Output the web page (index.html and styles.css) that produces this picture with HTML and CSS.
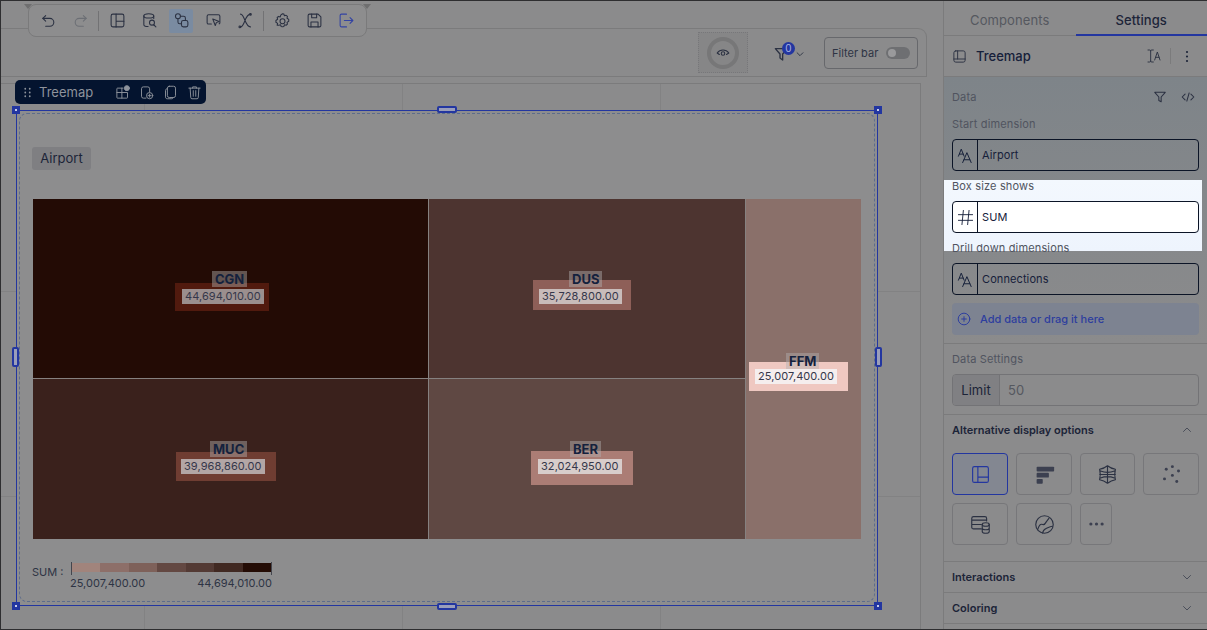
FILE: index.html
```html
<!DOCTYPE html>
<html lang="en">
<head>
<meta charset="utf-8">
<title>Treemap settings</title>
<link rel="stylesheet" href="styles.css">
</head>
<body>
<div class="app">
  <main class="main">
    <div class="edit-toolbar">
      <button class="tool"><svg class="ico" viewBox="0 0 24 24"><path d="M8 5 4 9l4 4"/><path d="M4 9h10a5.500 5.500 0 0 1 0 11H8"/></svg></button>
      <button class="tool tool-off"><svg class="ico" viewBox="0 0 24 24"><path d="m16 5 4 4-4 4"/><path d="M20 9H10a5.500 5.500 0 0 0 0 11h6"/></svg></button>
      <span class="tool-sep"></span>
      <button class="tool"><svg class="ico" viewBox="0 0 24 24"><rect x="3" y="3" width="18" height="18" rx="2.500"/><path d="M10 3v18M10 13h11"/></svg></button>
      <button class="tool"><svg class="ico" viewBox="0 0 24 24"><ellipse cx="11" cy="5.500" rx="7" ry="3"/><path d="M4 5.500v12c0 1.600 2.500 3 6 3M18 5.500V9"/><circle cx="15.500" cy="15" r="3.500"/><path d="m18 18 3 3"/></svg></button>
      <button class="tool tool-on"><svg class="ico" viewBox="0 0 24 24"><circle cx="7" cy="6" r="3.500"/><rect x="12" y="12" width="9" height="9" rx="2.500"/><path d="M7 9.500V14c0 1.500 1 2.500 2.500 2.500H12M10.500 6H15c1.500 0 2.500 1 2.500 2.500V12"/></svg></button>
      <button class="tool"><svg class="ico" viewBox="0 0 24 24"><path d="M9 17H5a2 2 0 0 1-2-2V6a2 2 0 0 1 2-2h14a2 2 0 0 1 2 2v9a2 2 0 0 1-1 1.700"/><path d="m11 10 9 3.500-4 1.500-1.500 4z"/></svg></button>
      <button class="tool"><svg class="ico" viewBox="0 0 24 24"><path d="M5 3c6 0 6 18 14 18M19 3C11 3 11 21 5 21"/><circle cx="19" cy="3.500" r="1.200"/><circle cx="4" cy="21" r="1.200"/></svg></button>
      <span class="tool-sep"></span>
      <button class="tool"><svg class="ico" viewBox="0 0 24 24"><path d="m12 2.500 2 .5.700 2.400 2.400-.7 1.900 1.600-.6 2.500 2.400 1.700v2.500l-2.400 1.600.6 2.500-1.900 1.600-2.400-.7-.7 2.400-2 .5-2-.5-.7-2.400-2.400.7L4.500 18.600l.6-2.500L2.700 14.500V12l2.400-1.700-.6-2.500 1.900-1.600 2.400.7.700-2.400z"/><circle cx="12" cy="13" r="3.500"/></svg></button>
      <button class="tool"><svg class="ico" viewBox="0 0 24 24"><path d="M5 3h12l4 4v12a2 2 0 0 1-2 2H5a2 2 0 0 1-2-2V5a2 2 0 0 1 2-2z"/><path d="M7 21v-7h10v7M8 3v5h7V3"/></svg></button>
      <button class="tool tool-exit"><svg class="ico" viewBox="0 0 24 24"><path d="M12 3H5a2 2 0 0 0-2 2v14a2 2 0 0 0 2 2h7"/><path d="M9 12h12M17 8l4 4-4 4"/></svg></button>
    </div>

    <header class="topbar">
      <div class="eye-box">
        <span class="eye-ring"><svg class="ico ico-eye" viewBox="0 0 24 24"><path d="M2 12c5-7 15-7 20 0-2 1.500-3 2-4 2.500M6 14.500c-1.500-.5-2.500-1.500-4-2.500"/><circle cx="12" cy="13" r="3"/></svg></span>
      </div>
      <div class="filter-btn">
        <svg class="ico ico-filter" viewBox="0 0 24 24"><path d="M2 4h18l-7 8v9l-4-3v-6z"/></svg>
        <span class="badge">0</span>
        <svg class="ico ico-chev" viewBox="0 0 24 24"><path d="m5 9 7 7 7-7"/></svg>
      </div>
      <div class="filter-bar"><span>Filter bar</span><span class="toggle"><span class="knob"></span></span></div>
    </header>

    <section class="canvas">
      <div class="widget">
        <div class="widget-bar">
          <svg class="ico ico-grip" viewBox="0 0 12 16"><circle cx="3" cy="3" r="1.200"/><circle cx="9" cy="3" r="1.200"/><circle cx="3" cy="8" r="1.200"/><circle cx="9" cy="8" r="1.200"/><circle cx="3" cy="13" r="1.200"/><circle cx="9" cy="13" r="1.200"/></svg>
          <span class="widget-name">Treemap</span>
          <span class="widget-sep"></span>
          <svg class="ico ico-w" viewBox="0 0 24 24"><path d="M13 5H4a1 1 0 0 0-1 1v14a1 1 0 0 0 1 1h15a1 1 0 0 0 1-1v-8H3M11 5v16"/><circle class="solid" cx="19" cy="5" r="4"/></svg>
          <svg class="ico ico-w" viewBox="0 0 24 24"><path d="M11 21H7a3 3 0 0 1-3-3V6a3 3 0 0 1 3-3h7a3 3 0 0 1 3 3v5"/><circle cx="17" cy="17" r="5"/><path d="M17 14.500v5M14.500 17h5"/></svg>
          <svg class="ico ico-w" viewBox="0 0 24 24"><rect x="7" y="2" width="13" height="18" rx="3"/><path d="M7 6c-2 0-3 1-3 3v10c0 2 1 3 3 3h7c1 0 2-.5 2.500-2"/></svg>
          <svg class="ico ico-w" viewBox="0 0 24 24"><path d="M3 5h18M9 5V3h6v2M5 5l1 15a2 2 0 0 0 2 2h8a2 2 0 0 0 2-2l1-15M10 9v9M14 9v9"/></svg>
        </div>
        <span class="handle h-tl"></span><span class="handle h-tr"></span><span class="handle h-bl"></span><span class="handle h-br"></span>
        <span class="pill pill-t"></span><span class="pill pill-b"></span><span class="pill pill-l"></span><span class="pill pill-r"></span>

        <div class="widget-inner">
          <div class="chip">Airport</div>
          <div class="treemap">
            <div class="tile tile-cgn"><span class="tile-name">CGN</span><span class="halo"><span class="val">44,694,010.00</span></span></div>
            <div class="tile tile-dus"><span class="tile-name">DUS</span><span class="halo"><span class="val">35,728,800.00</span></span></div>
            <div class="tile tile-ffm"><span class="tile-name">FFM</span><span class="halo"><span class="val">25,007,400.00</span></span></div>
            <div class="tile tile-muc"><span class="tile-name">MUC</span><span class="halo"><span class="val">39,968,860.00</span></span></div>
            <div class="tile tile-ber"><span class="tile-name">BER</span><span class="halo"><span class="val">32,024,950.00</span></span></div>
          </div>
          <div class="legend">
            <span class="legend-title">SUM :</span>
            <div class="legend-scale">
              <div class="legend-bar"><i class="s1"></i><i class="s2"></i><i class="s3"></i><i class="s4"></i><i class="s5"></i><i class="s6"></i><i class="s7"></i></div>
              <div class="legend-labels"><span>25,007,400.00</span><span>44,694,010.00</span></div>
            </div>
          </div>
        </div>
      </div>
    </section>
  </main>

  <aside class="panel">
    <nav class="tabs"><span class="tab">Components</span><span class="tab tab-on">Settings</span></nav>
    <div class="panel-title">
      <svg class="ico ico-title" viewBox="0 0 24 24"><rect x="3" y="3" width="18" height="18" rx="3"/><path d="M9 3v13M3 16h18"/></svg>
      <span class="panel-name">Treemap</span>
      <svg class="ico ico-ia" viewBox="0 0 24 24"><path d="M3 3h2.500a1.500 1.500 0 0 1 1.500 1.500V19.500A1.500 1.500 0 0 1 5.500 21H3M11 3H8.500A1.500 1.500 0 0 0 7 4.500M7 19.500A1.500 1.500 0 0 0 8.500 21H11M13 18l4-12 4 12M14.500 14h5"/></svg>
      <span class="title-sep"></span>
      <svg class="ico-dots" viewBox="0 0 4 16"><circle cx="2" cy="2.500" r="1.300"/><circle cx="2" cy="8" r="1.300"/><circle cx="2" cy="13.500" r="1.300"/></svg>
    </div>

    <section class="sec sec-data">
      <div class="spotlight"></div>
      <div class="sec-head">
        <span class="lbl">Data</span>
        <svg class="ico ico-sm" viewBox="0 0 24 24"><path d="M3 4h18l-7 8v8l-4-2v-6z"/></svg>
        <svg class="ico ico-sm ico-code" viewBox="0 0 24 24"><path d="M7 7l-5 5 5 5M17 7l5 5-5 5M14 5l-4 14"/></svg>
      </div>
      <div class="lbl lbl-field">Start dimension</div>
      <div class="field"><span class="field-ico"><svg class="ico ico-aa" viewBox="0 0 24 24"><path d="M2 13 6 3l4 10M3.500 10h5M8 22l6-14 6 14M10 18h8"/></svg></span><span class="field-val">Airport</span></div>
      <div class="lbl lbl-field lbl-lit">Box size shows</div>
      <div class="field field-lit"><span class="field-ico"><svg class="ico ico-hash" viewBox="0 0 24 24"><path d="M9 2 7 22M17 2l-2 20M2 8h20M2 16h20"/></svg></span><span class="field-val">SUM</span></div>
      <div class="lbl lbl-field lbl-lit">Drill down dimensions</div>
      <div class="field"><span class="field-ico"><svg class="ico ico-aa" viewBox="0 0 24 24"><path d="M2 13 6 3l4 10M3.500 10h5M8 22l6-14 6 14M10 18h8"/></svg></span><span class="field-val">Connections</span></div>
      <div class="add-data">
        <svg class="ico ico-add" viewBox="0 0 24 24"><circle cx="12" cy="12" r="10"/><path d="M12 8v8M8 12h8"/></svg>
        <span>Add data or drag it here</span>
      </div>
    </section>

    <section class="sec sec-settings">
      <div class="lbl">Data Settings</div>
      <div class="limit"><span class="limit-key">Limit</span><span class="limit-val">50</span></div>
    </section>

    <section class="sec sec-alt">
      <div class="sec-row"><span class="sec-title">Alternative display options</span><svg class="ico ico-chev2" viewBox="0 0 24 24"><path d="m5 15 7-7 7 7"/></svg></div>
      <div class="opts">
        <div class="opt opt-on"><svg class="ico ico-opt" viewBox="0 0 24 24"><rect x="3" y="3" width="18" height="18" rx="2"/><path d="M9 3v18M9 15h12"/></svg></div>
        <div class="opt"><svg class="ico-opt" viewBox="0 0 24 24"><rect class="fill" x="3" y="3" width="20" height="5.500" rx="1"/><rect class="fill" x="3" y="10" width="14" height="5.500" rx="1"/><rect class="fill" x="3" y="17" width="7" height="5.500" rx="1"/></svg></div>
        <div class="opt"><svg class="ico ico-opt" viewBox="0 0 24 24"><path d="M12 2c2.500 2 5.500 3.500 9 4-1 4-1 8 0 12-3.500.5-6.500 2-9 4-2.500-2-5.500-3.500-9-4 1-4 1-8 0-12 3.500-.5 6.500-2 9-4zM12 2v20M3 12h18M4 8c5 2 11 2 16 0M4 16c5-2 11-2 16 0"/></svg></div>
        <div class="opt"><svg class="ico-opt" viewBox="0 0 24 24"><circle class="fill" cx="13" cy="3" r="1.700"/><circle class="fill" cx="6" cy="6" r="1.700"/><circle class="fill" cx="20" cy="8" r="1.700"/><circle class="fill" cx="13" cy="13" r="1.700"/><circle class="fill" cx="4" cy="17" r="1.700"/><circle class="fill" cx="18" cy="20" r="1.700"/></svg></div>
        <div class="opt"><svg class="ico ico-opt" viewBox="0 0 24 24"><path d="M13 17H4a2 2 0 0 1-2-2V5a2 2 0 0 1 2-2h13a2 2 0 0 1 2 2v3M2 7h17M2 12h11"/><ellipse cx="18" cy="12" rx="4" ry="2"/><path d="M14 12v8c0 1 2 2 4 2s4-1 4-2v-8M14 16c0 1 2 2 4 2s4-1 4-2"/></svg></div>
        <div class="opt"><svg class="ico ico-opt" viewBox="0 0 24 24"><circle cx="12" cy="12" r="10"/><path d="M4 18c2-5 3-7 6-6 2 .5 3-1 4-3l3-4M10 22c0-4 3-5 5-6 2-1 4-2 6-2"/></svg></div>
        <div class="opt opt-more"><svg class="ico-more" viewBox="0 0 16 4"><circle class="fill" cx="2" cy="2" r="1.700"/><circle class="fill" cx="8" cy="2" r="1.700"/><circle class="fill" cx="14" cy="2" r="1.700"/></svg></div>
      </div>
    </section>

    <section class="sec sec-fold"><span class="sec-title">Interactions</span><svg class="ico ico-chev2" viewBox="0 0 24 24"><path d="m5 9 7 7 7-7"/></svg></section>
    <section class="sec sec-fold"><span class="sec-title">Coloring</span><svg class="ico ico-chev2" viewBox="0 0 24 24"><path d="m5 9 7 7 7-7"/></svg></section>
  </aside>
</div>
</body>
</html>
```

FILE: styles.css
```css
* { box-sizing: border-box; }
html, body { margin: 0; padding: 0; }
body { width: 1207px; height: 630px; overflow: hidden; background: #2e2e30; font-family: Inter, "Liberation Sans", sans-serif; color: #16203a; }
button { font: inherit; }

.ico { fill: none; stroke: #2b3142; stroke-width: 1.700; stroke-linecap: round; stroke-linejoin: round; flex: none; display: block; }
.fill { fill: #3c4050; }

.app { display: flex; width: 1207px; height: 628px; margin-top: 1px; padding-left: 1px; background: #2e2e30; }
.main { position: relative; width: 942px; flex: none; background: #8b8b8c; padding-top: 27px; }

/* floating edit toolbar */
.edit-toolbar { position: absolute; left: 27px; top: 3px; width: 339px; height: 33px; display: flex; align-items: center; padding-left: 7px; background: #8d8d8e; border: 1px solid #7a7a7b; border-radius: 8px; z-index: 5; }
.edit-toolbar::before, .edit-toolbar::after { content: ""; position: absolute; top: -1px; width: 0; height: 0; border-top: 5px solid #6e6e6f; border-left: 4px solid transparent; border-right: 4px solid transparent; }
.edit-toolbar::before { left: -5px; }
.edit-toolbar::after { right: -5px; }
.tool { width: 24px; height: 24px; padding: 3.500px; margin-right: 8px; background: none; border: 0; border-radius: 2px; display: block; flex: none; }
.tool .ico { width: 17px; height: 17px; stroke-width: 1.500; }
.tool-off .ico { stroke: #6c6f75; }
.tool-on { background: #7a8ba1; }
.tool-exit { margin-right: 0; }
.tool-exit .ico { stroke: #3343a3; }
.tool-sep { width: 1px; height: 20px; background: #727274; margin: 0 6px 0 -2px; flex: none; }

/* top filter strip */
.topbar { height: 49px; margin-right: 16px; border: 1px solid #7b7b7c; border-left: 0; border-radius: 0 9px 0 0; display: flex; align-items: center; justify-content: flex-end; padding-right: 8px; }
.eye-box { width: 50px; height: 41px; border: 1px dotted #77777a; background: #868687; display: flex; align-items: center; justify-content: center; margin-right: 26px; }
.eye-ring { width: 32px; height: 32px; border: 4px solid #777778; border-radius: 50%; display: flex; align-items: center; justify-content: center; }
.ico-eye { width: 14px; height: 14px; stroke-width: 1.800; }
.filter-btn { position: relative; width: 33px; height: 24px; margin-right: 17px; display: flex; align-items: center; }
.ico-filter { width: 16px; height: 16px; margin-top: 2px; stroke-width: 2; }
.badge { position: absolute; left: 8px; top: 1px; width: 13px; height: 13px; border-radius: 50%; background: #2336a0; color: #a9b3e0; font-size: 10px; line-height: 13px; text-align: center; }
.ico-chev { width: 10px; height: 10px; margin: 2px 0 0 5px; stroke-width: 2.200; }
.filter-bar { width: 94px; height: 32px; border: 1px solid #67686c; border-radius: 4px; display: flex; align-items: center; justify-content: space-between; padding: 0 7px; font-size: 11px; color: #2e3444; }
.toggle { width: 24px; height: 12px; border-radius: 6px; background: #6e6f72; padding: 2px; display: block; }
.knob { display: block; width: 8px; height: 8px; border-radius: 50%; background: #9a9a9c; }

/* canvas */
.canvas { height: 546px; margin: 6px 22px 0 0; padding: 26px 0 0 15px; border: 1px solid #7b7b7c; border-left: 0; border-bottom: 0;
  background:
    linear-gradient(#828283, #828283) 143px 0 / 1px 100% no-repeat,
    linear-gradient(#828283, #828283) 401px 0 / 1px 100% no-repeat,
    linear-gradient(#828283, #828283) 659px 0 / 1px 100% no-repeat,
    linear-gradient(#828283, #828283) 0 207px / 100% 1px no-repeat,
    linear-gradient(#828283, #828283) 0 412px / 100% 1px no-repeat,
    #8b8b8c; }
.widget { position: relative; width: 862px; height: 496px; border: 1.500px solid #2336a0; background: #8d8d8e; padding: 2px; }
.widget-bar { position: absolute; left: -2px; top: -31px; width: 191px; height: 24px; background: #04142f; border-radius: 5px; display: flex; align-items: center; padding-left: 8px; color: #8e939c; z-index: 4; }
.ico-grip { width: 9px; height: 13px; fill: #8e939c; stroke: none; }
.widget-name { font-size: 13px; margin-left: 7px; }
.widget-sep { width: 1px; height: 12px; background: #7a808c; margin: 0 13px 0 9px; }
.ico-w { width: 15px; height: 15px; stroke: #8e939c; stroke-width: 1.500; margin-right: 9px; }
.ico-w .solid { fill: #8e939c; }

.handle { position: absolute; width: 8px; height: 8px; background: #2336a0; z-index: 3; }
.handle::after { content: ""; position: absolute; left: 3px; top: 3px; width: 2px; height: 2px; background: #c9cdea; }
.h-tl { left: -5px; top: -5px; }
.h-tr { right: -5px; top: -5px; }
.h-bl { left: -5px; bottom: -5px; }
.h-br { right: -5px; bottom: -5px; }
.pill { position: absolute; border: 2px solid #2336a0; background: #9a9eba; border-radius: 2px; z-index: 3; }
.pill-t, .pill-b { width: 20px; height: 7px; left: 420px; }
.pill-t { top: -5px; }
.pill-b { bottom: -5px; }
.pill-l, .pill-r { width: 7px; height: 20px; top: 236px; }
.pill-l { left: -5px; }
.pill-r { right: -5px; }

.widget-inner { height: 489px; border: 1px dashed #5c6c8c; border-radius: 8px; padding: 33px 14px 0 13px; }
.chip { width: 59px; height: 23px; margin-left: -1px; background: #7f7f82; border-radius: 3px; font-size: 13px; line-height: 23px; text-align: center; color: #1c2438; }

/* treemap */
.treemap { display: grid; grid-template-columns: 395px 316px 115px; grid-template-rows: 179px 160px; gap: 1px; width: 828px; height: 340px; margin-top: 29px; background: #868180; }
.tile { position: relative; }
.tile-cgn { background: #230b05; }
.tile-dus { background: #4d3430; }
.tile-muc { background: #3a211c; }
.tile-ber { background: #5f4843; }
.tile-ffm { background: #8a706a; grid-row: 1 / 3; grid-column: 3; z-index: 1; }
.tile-muc { grid-row: 2; grid-column: 1; }
.tile-ber { grid-row: 2; grid-column: 2; }

.tile-name { position: absolute; padding: 0 3px; height: 16px; line-height: 17px; font-size: 13px; font-weight: 700; color: #14213d; background: rgba(178, 176, 176, .45); z-index: 2; }
.halo { position: absolute; display: block; }
.val { display: block; height: 15px; line-height: 15px; padding: 0 3px; font-size: 11px; letter-spacing: .07px; color: #35374a; white-space: nowrap; }

.tile-cgn .tile-name { left: 179px; top: 72px; }
.tile-cgn .halo { left: 142px; top: 84px; padding: 6px 5px 7px 7px; background: #511a0e; }
.tile-cgn .val { background: #9b8f8e; }
.tile-dus .tile-name { left: 140px; top: 72px; }
.tile-dus .halo { left: 104px; top: 81px; padding: 9px 9px 6px 6px; background: #8e5f58; }
.tile-dus .val { background: #c9bcba; }
.tile-muc .tile-name { left: 177px; top: 62px; }
.tile-muc .halo { left: 143px; top: 73px; padding: 7px 11px 7px 5px; background: #6f3d32; }
.tile-muc .val { background: #b3a6a5; }
.tile-ber .tile-name { left: 141px; top: 62px; }
.tile-ber .halo { left: 102px; top: 72px; padding: 8px 11px 11px 7px; background: #ab7d75; }
.tile-ber .val { background: #d8cdcb; }
.tile-ffm .tile-name { left: 40px; top: 154px; }
.tile-ffm .halo { left: 3px; top: 163px; padding: 7px 11px 7px 6px; background: #efc8c1; }
.tile-ffm .val { background: #f5eeee; }

/* legend */
.legend { display: flex; margin: 24px 0 0 -1px; font-size: 11px; color: #2e3444; }
.legend-title { width: 39px; line-height: 14px; margin-top: 2px; }
.legend-scale { width: 201px; }
.legend-bar { position: relative; display: flex; height: 9px; padding: 0 1px; }
.legend-bar::before, .legend-bar::after { content: ""; position: absolute; top: -1px; width: 1px; height: 13px; background: #44464e; }
.legend-bar::before { left: 0; }
.legend-bar::after { right: 0; }
.legend-bar i { display: block; flex: 1; }
.s1 { background: #a1847c; }
.s2 { background: #8d6f69; }
.s3 { background: #7e615a; }
.s4 { background: #634842; }
.s5 { background: #533a34; }
.s6 { background: #412922; }
.s7 { background: #240c05; }
.legend-labels { display: flex; justify-content: space-between; line-height: 14px; margin: 4px 0 0 -1px; white-space: nowrap; }

/* side panel */
.panel { width: 264px; flex: none; background: #8b8b8c; border-left: 1px solid #7b7b7c; display: flex; flex-direction: column; overflow: hidden; }
.tabs { display: flex; height: 35px; flex: none; padding-top: 3px; border-bottom: 1px solid #7b7b7c; }
.tab { width: 132px; text-align: center; font-size: 13px; line-height: 32px; color: #55585f; letter-spacing: .1px; }
.tab-on { color: #1c2438; height: 32px; border-bottom: 2px solid #2336a0; font-weight: 500; }
.panel-title { height: 41px; flex: none; display: flex; align-items: center; padding: 0 18px 0 8px; border-bottom: 1px solid #7b7b7c; }
.ico-title { width: 15px; height: 15px; stroke-width: 1.500; }
.panel-name { font-size: 13px; font-weight: 500; margin-left: 9px; flex: 1; }
.ico-ia { width: 16px; height: 16px; stroke-width: 1.400; }
.title-sep { width: 1px; height: 16px; background: #7b7b7c; margin: 0 14px 0 8px; }
.ico-dots { width: 4px; height: 13px; fill: #1c2438; display: block; }

.sec { padding: 0 8px; border-bottom: 1px solid #7b7b7c; flex: none; position: relative; }
.lbl { font-size: 11px; line-height: 14px; color: #50545f; letter-spacing: .15px; }
.sec-data { height: 267px; padding-top: 13px; background: linear-gradient(#7e8489, #84878a 45%, #8b8b8c); }
.spotlight { position: absolute; left: 0; top: 103px; width: 258px; height: 71px; background: linear-gradient(#f3f8fe, #eef4fd); }
.sec-head { display: flex; align-items: center; height: 14px; position: relative; }
.sec-head .lbl { flex: 1; }
.ico-sm { width: 14px; height: 14px; stroke-width: 1.800; margin-right: 2px; }
.ico-code { margin: 0 4px 0 12px; }
.lbl-field { margin-top: 13px; position: relative; }
.lbl-lit { margin-top: 8px; }
.field { position: relative; height: 32px; margin-top: 8px; display: flex; border: 1px solid #0b1426; border-radius: 4px; font-size: 11px; color: #16203a; }
.field-lit { background: #fff; }
.field-ico { width: 25px; border-right: 1px solid #0b1426; display: flex; align-items: center; justify-content: center; flex: none; }
.ico-aa { width: 17px; height: 17px; stroke-width: 1.400; stroke: #16203a; }
.ico-hash { width: 17px; height: 17px; stroke-width: 1.300; stroke: #16203a; }
.field-val { line-height: 30px; padding-left: 4px; letter-spacing: .1px; }
.add-data { height: 32px; margin-top: 8px; background: #7d8391; border-radius: 4px; display: flex; align-items: center; padding-left: 5px; font-size: 11px; font-weight: 500; color: #2d3e9e; }
.ico-add { width: 14px; height: 14px; stroke: #2d3e9e; margin-right: 9px; }

.sec-settings { height: 71px; padding-top: 8px; }
.limit { height: 32px; margin-top: 8px; border: 1px solid #737376; border-radius: 4px; display: flex; font-size: 13px; }
.limit-key { width: 47px; line-height: 30px; text-align: center; background: #808083; border-right: 1px solid #737376; color: #1c2438; border-radius: 3px 0 0 3px; }
.limit-val { padding-left: 8px; line-height: 30px; color: #55585f; }

.sec-alt { height: 147px; padding-top: 8px; }
.sec-row { display: flex; justify-content: space-between; align-items: center; height: 14px; }
.sec-title { font-size: 11px; font-weight: 600; line-height: 14px; color: #1c2438; }
.ico-chev2 { width: 12px; height: 12px; stroke: #4a4e5a; stroke-width: 2; margin-right: 6px; }
.opts { display: grid; grid-template-columns: 56px 56px 55px 56px; grid-auto-rows: 42px; gap: 8px 8px; margin-top: 16px; }
.opt { border: 1px solid #77777a; border-radius: 4px; display: flex; align-items: center; justify-content: center; }
.opt-on { border-color: #2336a0; background: #838791; }
.opt-on .ico { stroke: #2336a0; }
.ico-opt { width: 21px; height: 21px; stroke-width: 1.300; display: block; }
.opt-more { width: 32px; }
.ico-more { width: 15px; height: 4px; display: block; }
.sec-fold { height: 31px; display: flex; align-items: center; justify-content: space-between; }
```
